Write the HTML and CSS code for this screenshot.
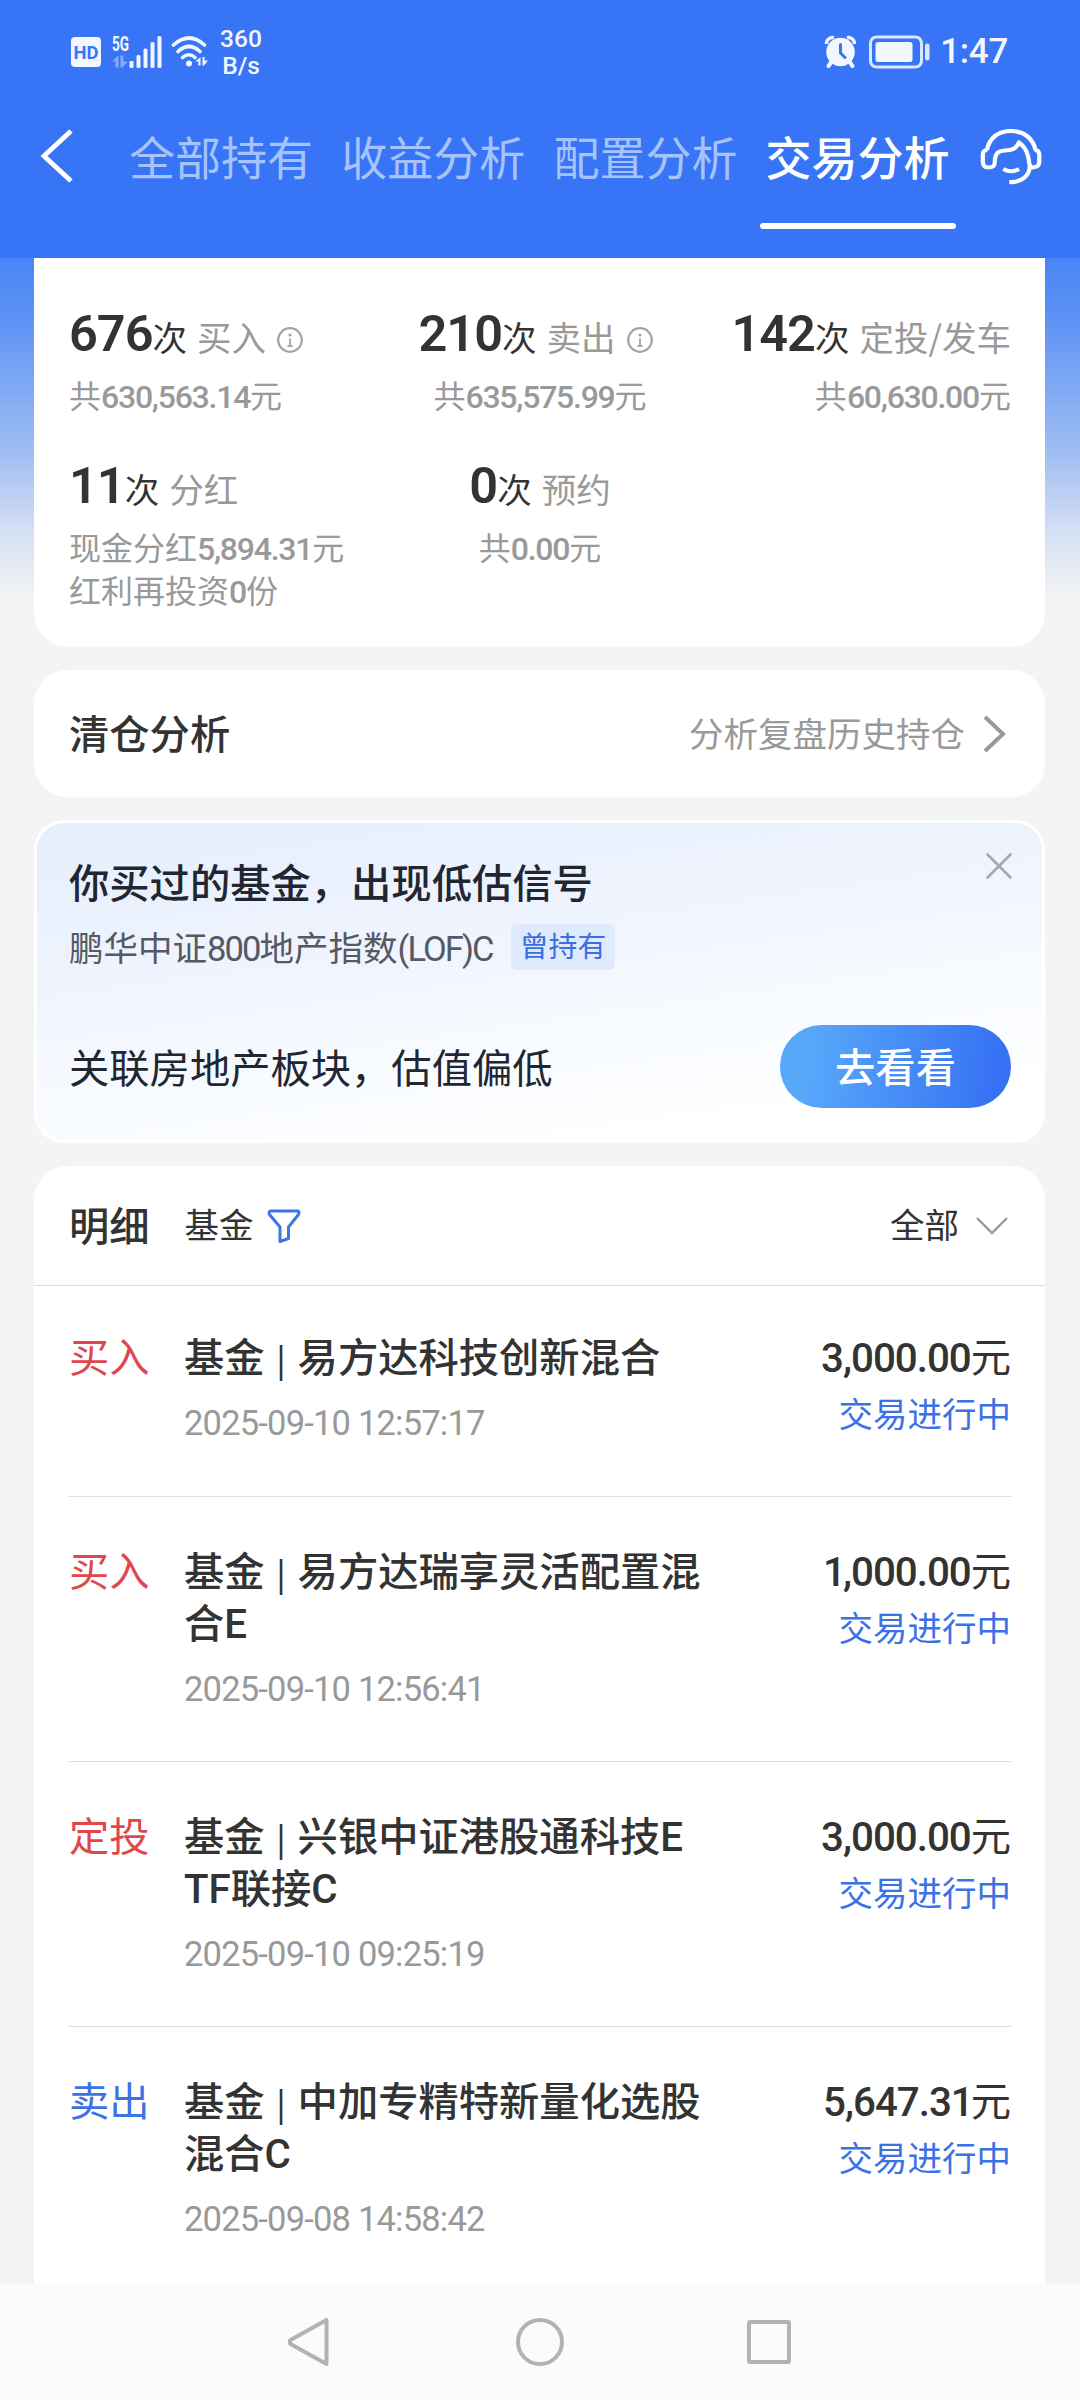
FILE: index.html
```html
<!DOCTYPE html>
<html lang="zh-CN">
<head>
<meta charset="utf-8">
<title>交易分析</title>
<link rel="stylesheet" href="styles.css">
</head>
<body>
<div class="screen">
  <header class="header">
    <div class="status">
      <div class="status-left">
        <svg class="ico-hd" width="30" height="30" viewBox="0 0 30 30"><rect width="30" height="30" rx="4" fill="#f1f6ff"/><text x="15" y="22" text-anchor="middle" textLength="25" lengthAdjust="spacingAndGlyphs" class="hd-text">HD</text></svg>
        <svg class="ico-signal" width="50" height="34" viewBox="0 0 50 34" fill="#f1f6ff"><text x="0" y="15.500" textLength="17" lengthAdjust="spacingAndGlyphs" class="g5-text">5G</text><path fill="#86abfa" d="M6.500 20.500v12H3.500v-6H0zM8.500 20.500h2.800v6H15.500l-5 6h-2z"/><rect x="17.500" y="26" width="4" height="7" rx="1.300"/><rect x="24.500" y="20" width="4" height="13" rx="1.500"/><rect x="31.500" y="13.500" width="4" height="19.500" rx="1.500"/><rect x="38.500" y="7" width="4" height="26" rx="1.500"/><rect x="45.500" y="1" width="4" height="32" rx="1.500"/></svg>
        <svg class="ico-wifi" width="38" height="34" viewBox="0 0 38 34" fill="none" stroke="#f1f6ff" stroke-width="3.600" stroke-linecap="round"><path d="M2.500 10Q18 -4 33.500 10M7 16.500Q18 6.500 29 16.500M11.500 22.500Q18 17 24 22.500"/><circle cx="18" cy="28.500" r="3" fill="#f1f6ff" stroke="none"/><path d="M29.500 22v8.500h-2.200V26.500h-3zM31.500 22h2v3.500h3.500l-4 5h-1.500z" fill="#f1f6ff" stroke="none"/></svg>
        <div class="speed">360<br>B/s</div>
      </div>
      <div class="status-right">
        <svg width="31" height="32" viewBox="0 0 31 32"><path d="M7 25l-3.500 5M24 25l3.500 5" stroke="#f1f6ff" stroke-width="4" stroke-linecap="round"/><path d="M1.500 8A6 6 0 0 1 9 1.800M29.500 8A6 6 0 0 0 22 1.800" stroke="#f1f6ff" stroke-width="3.400" fill="none"/><circle cx="15.500" cy="16" r="14.300" fill="#f1f6ff"/><path d="M15.500 8.500V17l4.500 4.500" stroke="#3875f6" stroke-width="3" fill="none" stroke-linecap="round"/></svg>
        <svg class="ico-battery" width="61" height="34" viewBox="0 0 61 34"><rect x="1.500" y="2" width="51" height="30" rx="6" fill="none" stroke="#dbe7fe" stroke-width="3"/><rect x="6.500" y="7" width="37" height="20" rx="2.500" fill="#f1f6ff"/><rect x="56" y="8.500" width="4.500" height="17" rx="2" fill="#dbe7fe"/></svg>
        <span class="clock">1:47</span>
      </div>
    </div>
    <nav class="tabs">
      <svg class="back" width="34" height="54" viewBox="0 0 34 54" fill="none" stroke="#fff" stroke-width="4.800"><path d="M31 2L4 27l27 25"/></svg>
      <span class="tab">全部持有</span>
      <span class="tab">收益分析</span>
      <span class="tab">配置分析</span>
      <span class="tab active">交易分析</span>
      <svg class="service" width="62" height="58" viewBox="0 0 62 58" fill="none" stroke="#fff" stroke-width="4.200" stroke-linejoin="round"><path d="M7 22C9 10 18.500 3 31 3s22 7 24.500 19M14.700 35.500C14.700 26 17 23 25 22.500c7 0 11-1.500 14-8 5 3.500 9 8 10.500 22.500M7.500 22C4 22 2.800 24 2.800 27v6c0 5 2 6.500 5.500 6.500s6.200-.5 6.400-4.500M54.500 22c3.500 0 4.800 2 4.800 5v6c0 5-2 6.500-9.800 6.500M50 36c0 12-8 18.500-20.700 18"/><path d="M23.300 41q7.700 4.500 15.700 0"/></svg>
    </nav>
  </header>

  <main class="content">
    <section class="card stats">
      <div class="stat">
        <div class="stat-head"><b>676</b><span class="unit">次</span><span class="label">买入</span><svg class="info" width="26" height="26" viewBox="0 0 26 26"><circle cx="13" cy="13" r="11.800" fill="none" stroke="#a3a3a3" stroke-width="2.200"/><circle cx="13" cy="8" r="1.600" fill="#a3a3a3"/><path d="M13 11.500V19M10.500 19h5" stroke="#a3a3a3" stroke-width="1.800" fill="none"/></svg></div>
        <div class="stat-sub">共<i>630,563.14</i>元</div>
      </div>
      <div class="stat center">
        <div class="stat-head"><b>210</b><span class="unit">次</span><span class="label">卖出</span><svg class="info" width="26" height="26" viewBox="0 0 26 26"><circle cx="13" cy="13" r="11.800" fill="none" stroke="#a3a3a3" stroke-width="2.200"/><circle cx="13" cy="8" r="1.600" fill="#a3a3a3"/><path d="M13 11.500V19M10.500 19h5" stroke="#a3a3a3" stroke-width="1.800" fill="none"/></svg></div>
        <div class="stat-sub">共<i>635,575.99</i>元</div>
      </div>
      <div class="stat right">
        <div class="stat-head"><b>142</b><span class="unit">次</span><span class="label">定投/发车</span></div>
        <div class="stat-sub">共<i>60,630.00</i>元</div>
      </div>
      <div class="stat">
        <div class="stat-head"><b>11</b><span class="unit">次</span><span class="label">分红</span></div>
        <div class="stat-sub">现金分红<i>5,894.31</i>元<br>红利再投资<i>0</i>份</div>
      </div>
      <div class="stat center">
        <div class="stat-head"><b>0</b><span class="unit">次</span><span class="label">预约</span></div>
        <div class="stat-sub">共<i>0.00</i>元</div>
      </div>
    </section>

    <section class="card clear">
      <h2 class="title">清仓分析</h2>
      <span class="clear-link">分析复盘历史持仓</span>
      <svg width="24" height="36" viewBox="0 0 24 36" fill="none" stroke="#999" stroke-width="4"><path d="M2 1l18 17L2 35"/></svg>
    </section>

    <section class="card promo">
      <div class="promo-top">
        <h2 class="title">你买过的基金，出现低估信号</h2>
        <svg class="close" width="26" height="26" viewBox="0 0 26 26" stroke="#a3a8b0" stroke-width="2.600" stroke-linecap="round"><path d="M1.500 1.500l23 23M24.500 1.500l-23 23"/></svg>
      </div>
      <div class="promo-fund"><span class="fund-name">鹏华中证<i>800</i>地产指数<i>(LOF)C</i></span><span class="tag">曾持有</span></div>
      <div class="promo-bottom"><span class="promo-text">关联房地产板块，估值偏低</span><span class="button">去看看</span></div>
    </section>

    <section class="card detail">
      <div class="detail-head">
        <h2 class="title">明细</h2>
        <span class="filter">基金</span>
        <svg width="34" height="34" viewBox="0 0 34 34" fill="none" stroke="#3d74e8" stroke-width="3" stroke-linejoin="round"><path d="M3 2h28q1.800 1.500 .5 3.500L21.500 18v11.500L13 32.500V18L2.500 5.500Q1.500 3.500 3 2z"/></svg>
        <span class="all">全部</span>
        <svg width="32" height="18" viewBox="0 0 32 18" fill="none" stroke="#999" stroke-width="2.400"><path d="M1 1l15 15L31 1"/></svg>
      </div>
      <ul class="rows">
        <li class="row"><span class="kind red">买入</span><div class="info-col"><div class="name">基金<span class="bar">|</span>易方达科技创新混合</div><div class="date">2025-09-10 12:57:17</div></div><div class="amount-col"><div class="amount"><i>3,000.00</i>元</div><div class="state">交易进行中</div></div></li>
        <li class="row"><span class="kind red">买入</span><div class="info-col"><div class="name">基金<span class="bar">|</span>易方达瑞享灵活配置混<br>合<i>E</i></div><div class="date">2025-09-10 12:56:41</div></div><div class="amount-col"><div class="amount"><i><span class="one">1</span>,000.00</i>元</div><div class="state">交易进行中</div></div></li>
        <li class="row"><span class="kind red">定投</span><div class="info-col"><div class="name">基金<span class="bar">|</span>兴银中证港股通科技<i>E</i><br><i>TF</i>联接<i>C</i></div><div class="date">2025-09-10 09:25:19</div></div><div class="amount-col"><div class="amount"><i>3,000.00</i>元</div><div class="state">交易进行中</div></div></li>
        <li class="row"><span class="kind blue">卖出</span><div class="info-col"><div class="name">基金<span class="bar">|</span>中加专精特新量化选股<br>混合<i>C</i></div><div class="date">2025-09-08 14:58:42</div></div><div class="amount-col"><div class="amount"><i>5,647.3<span class="one">1</span></i>元</div><div class="state">交易进行中</div></div></li>
      </ul>
    </section>
  </main>

  <footer class="navbar">
    <svg width="44" height="50" viewBox="0 0 44 50" fill="none" stroke="#b0b2b4" stroke-width="4" stroke-linejoin="round"><path d="M39.500 3v44L3.500 27q-1.500-2 0-4z"/></svg>
    <svg width="50" height="50" viewBox="0 0 50 50" fill="none" stroke="#b0b2b4" stroke-width="4"><circle cx="26" cy="25" r="22"/></svg>
    <svg width="44" height="44" viewBox="0 0 44 44" fill="none" stroke="#b0b2b4" stroke-width="4"><rect x="2" y="2" width="40" height="40" rx="1.500"/></svg>
  </footer>
</div>
</body>
</html>
```
FILE: styles.css
```css
* { box-sizing: border-box; }
body {
  margin: 0;
  background: #f4f4f4;
  color: #333;
  font-family: "Noto Sans CJK SC", sans-serif;
}
svg { display: block; flex: none; overflow: visible; }
i, b { font-family: Roboto, "Noto Sans CJK SC", sans-serif; font-style: normal; line-height: 1; }
h2 { margin: 0; }

.screen { width: 1080px; height: 2400px; display: flex; flex-direction: column; overflow: hidden; }

/* header */
.header { height: 258px; flex: none; background: #3875f6; color: #fff; }
.status { height: 104px; padding: 0 72px 0 71px; display: flex; justify-content: space-between; align-items: center; }
.status-left, .status-right { display: flex; align-items: center; }
.ico-signal { margin-left: 11px; }
.ico-wifi { margin-left: 9px; }
.hd-text { font: 700 19px Roboto, sans-serif; fill: #3875f6; }
.g5-text { font: 700 20px Roboto, sans-serif; }
.speed { margin-left: 11px; width: 42px; font: 500 24.500px/27.500px Roboto, sans-serif; text-align: center; color: #f1f6ff; }
.ico-battery { margin-left: 13px; }
.clock { margin-left: 10px; font: 500 35px/40px Roboto, sans-serif; letter-spacing: -.3px; color: #f1f6ff; }
.tabs { display: flex; padding-left: 40px; height: 126px; align-items: flex-start; }
.back { margin: 25px 55px 0 0; }
.tab { width: 184px; margin-right: 28.200px; font-size: 46px; line-height: 102px; white-space: nowrap; color: #a6c3fb; display: flex; flex-direction: column; align-items: center; }
.tab.active { color: #fff; font-weight: 500; margin-right: 30px; }
.tab.active::after { content: ""; width: 196px; height: 6px; border-radius: 3px; background: #fff; margin-top: 17px; }
.service { margin-top: 24px; }

/* cards */
.content { flex: 1; min-height: 0; overflow: hidden; padding: 0 35px 0 34px; background: linear-gradient(#4a85f7 0, #5d92f5 60px, #9dbcf3 190px, #d5e0f3 275px, #f4f4f4 345px); }
.card { background: #fff; border-radius: 34px; margin-bottom: 23px; padding: 0 34px 0 35px; }
.title { font-size: 40.300px; line-height: 52px; font-weight: 500; white-space: nowrap; }

.stats { height: 389px; border-radius: 0 0 34px 34px; display: grid; grid-template-columns: repeat(3, 1fr); grid-template-rows: 152px 1fr; padding-top: 46px; }
.stat { white-space: nowrap; display: flex; flex-direction: column; align-items: flex-start; }
.stat.center { align-items: center; }
.stat.right { align-items: flex-end; }
.stat-head { display: flex; align-items: baseline; line-height: 64px; height: 69px; font-size: 34.500px; }
.stat-head b { font-size: 50.500px; font-weight: 600; letter-spacing: -1px; }
.label { color: #999; margin-left: 10px; }
.info { margin: 0 9px 0 11px; align-self: center; position: relative; top: 1px; }
.stat-sub { font-size: 32px; line-height: 43px; color: #999; }
.stat-sub i { font-weight: 500; letter-spacing: -1.250px; }

.clear { height: 127px; display: flex; align-items: center; }
.clear .title, .clear-link { padding-bottom: 4px; }
.clear-link { margin: 0 18px 0 auto; font-size: 34.500px; line-height: 50px; color: #999; }
.clear svg { margin-right: 4px; }

.promo { height: 323px; border: 3px solid #fff; border-radius: 30px; padding: 32px 31px 0 32px; color: #222631; background: linear-gradient(172deg, #e4eefd 0, #f0f4fe 38%, #f8fbff 65%, #fff 88%); }
.promo-top { display: flex; justify-content: space-between; align-items: flex-start; height: 64px; }
.close { margin-right: -1px; margin-top: -2px; }
.promo-fund { display: flex; align-items: center; height: 46px; margin-top: 5px; font-size: 34.500px; line-height: 46px; color: #555963; }
.fund-name { width: 424px; padding-bottom: 3px; white-space: nowrap; }
.promo-fund i { letter-spacing: -1.900px; }
.tag { margin-left: 18px; width: 104px; height: 46px; line-height: 41px; border-radius: 6px; background: #dfeafc; color: #3b6fe2; font-size: 28.800px; text-align: center; }
.promo-bottom { display: flex; justify-content: space-between; align-items: center; margin-top: 55px; height: 83px; font-size: 40.300px; }
.promo-text { padding-bottom: 3px; }
.button { width: 231px; height: 83px; line-height: 79px; border-radius: 42px; text-align: center; color: #fff; font-weight: 500; background: linear-gradient(95deg, #58a8fa 12%, #3671f4 94%); }

.detail { padding: 0; border-radius: 34px 34px 0 0; margin: 0; height: 1200px; }
.detail-head { height: 120px; padding: 0 37px 0 35px; display: flex; align-items: center; border-bottom: 1px solid #ddd; font-size: 34.500px; }
.detail-head .title { padding-bottom: 4px; }
.filter { margin: 0 13px 0 35px; padding-bottom: 5px; }
.all { margin: 0 17px 0 auto; padding-bottom: 5px; }
.rows { list-style: none; margin: 0; padding: 0 34px 0 35px; }
.row { display: flex; padding: 46px 0 52px; border-bottom: 1px solid #ddd; font-size: 40.300px; line-height: 52px; white-space: nowrap; }
.row:first-child { padding: 43px 0 53px; }
.kind { width: 115px; }
.red { color: #e0474c; }
.blue { color: #3b72e6; }
.name { font-weight: 500; }
.name i { font-weight: 500; }
.bar { display: inline-block; width: 33px; text-align: center; font-size: 32px; line-height: 1; }
.date { font: 400 34.500px/40px Roboto, sans-serif; color: #999; margin-top: 22px; letter-spacing: -.8px; }
.amount-col { margin-left: auto; text-align: right; }
.amount i { font-weight: 500; letter-spacing: -1px; }
.one { letter-spacing: -3px; }
.state { font-size: 34.500px; line-height: 52px; margin-top: 5px; color: #3b72e6; }

/* system navigation */
.navbar { height: 116px; flex: none; background: #fafbfd; display: flex; align-items: center; padding: 0 289px 0 287px; justify-content: space-between; }
```
